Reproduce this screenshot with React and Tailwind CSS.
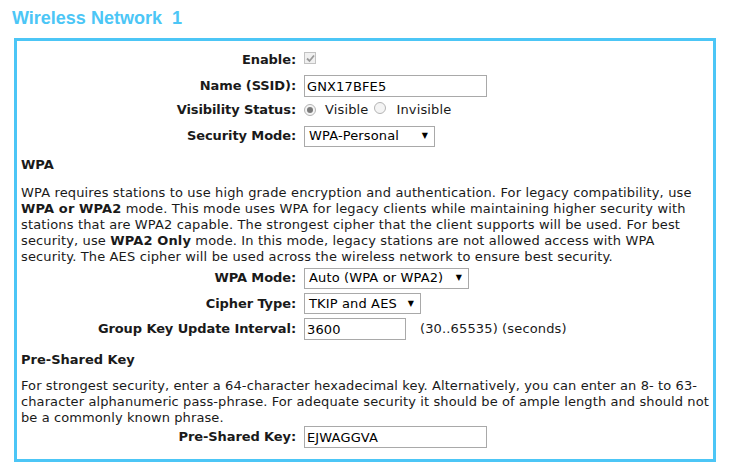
import React from 'react';

const Label = ({ children }) => (
  <div className="w-[283px] shrink-0 text-right font-bold pr-[8px] tracking-[-0.1px]">{children}</div>
);

const Row = ({ label, h, children }) => (
  <div className={`flex items-center ${h}`}>
    <Label>{label}</Label>
    <div className="flex items-center tracking-[0.14px]">{children}</div>
  </div>
);

const TextBox = ({ value, w }) => (
  <input
    readOnly
    value={value}
    className={`${w} h-[22px] border border-[#a9a9a9] px-[2px] text-[13px] text-black outline-none font-['DejaVu_Sans',sans-serif]`}
  />
);

const Select = ({ value, w }) => (
  <div className={`${w} h-[21px] border border-[#a9a9a9] bg-white flex items-center justify-between pl-[4px] pr-[6px]`}>
    <span className="text-black">{value}</span>
    <span className="text-[8px] text-black">▼</span>
  </div>
);

const Radio = ({ checked }) => (
  <span className="inline-flex w-[12px] h-[12px] rounded-full border border-[#b4b4b4] bg-[#f4f4f4] items-center justify-center">
    {checked && <span className="w-[6px] h-[6px] rounded-full bg-[#7a7a7a]" />}
  </span>
);

export default function App() {
  return (
    <div className="w-[729px] h-[471px] bg-white font-['DejaVu_Sans',sans-serif] text-[13px] text-[#1a1a1a] leading-[16px]">
      <h1 className="pl-[12px] pt-[8px] h-[38px] font-['Liberation_Sans',Arial,sans-serif] font-bold text-[18px] leading-[20px] text-[#4cc6f6]">
        Wireless Network&nbsp;&nbsp;1
      </h1>
      <div className="ml-[14px] w-[702px] h-[424px] border-[3px] border-[#4cc6f6] pl-[4px]">
        <div className="pt-[6px]">
          <Row label="Enable:" h="h-[26px]">
            <span className="w-[12px] h-[12px] border border-[#c2c2c2] bg-[#f0f0f0] flex items-center justify-center -mt-[4px]">
              <svg width="9" height="9" viewBox="0 0 9 9">
                <path d="M1 4.5 L3.5 7 L8 1.5" stroke="#9a9a9a" strokeWidth="1.8" fill="none" />
              </svg>
            </span>
          </Row>
          <Row label="Name (SSID):" h="h-[26px]">
            <TextBox value="GNX17BFE5" w="w-[183px]" />
          </Row>
          <Row label="Visibility Status:" h="h-[21px]">
            <span className="flex items-center">
              <Radio checked />
              <span className="ml-[9px]">Visible</span>
              <span className="ml-[6px]"><Radio /></span>
              <span className="ml-[10px]">Invisible</span>
            </span>
          </Row>
          <Row label="Security Mode:" h="h-[32px]">
            <Select value="WPA-Personal" w="w-[131px]" />
          </Row>
        </div>

        <h2 className="font-bold text-[13px] leading-[18px] mt-[4px]">WPA</h2>
        <p className="mt-[11px] whitespace-nowrap tracking-[0.14px]">
          WPA requires stations to use high grade encryption and authentication. For legacy compatibility, use<br />
          <b>WPA or WPA2</b> mode. This mode uses WPA for legacy clients while maintaining higher security with<br />
          stations that are WPA2 capable. The strongest cipher that the client supports will be used. For best<br />
          security, use <b>WPA2 Only</b> mode. In this mode, legacy stations are not allowed access with WPA<br />
          security. The AES cipher will be used across the wireless network to ensure best security.
        </p>

        <div className="mt-0">
          <Row label="WPA Mode:" h="h-[26px]">
            <Select value="Auto (WPA or WPA2)" w="w-[165px]" />
          </Row>
          <Row label="Cipher Type:" h="h-[25px]">
            <Select value="TKIP and AES" w="w-[117px]" />
          </Row>
          <Row label="Group Key Update Interval:" h="h-[26px]">
            <TextBox value="3600" w="w-[102px]" />
            <span className="ml-[14px]">(30..65535) (seconds)</span>
          </Row>
        </div>

        <h2 className="font-bold text-[13px] leading-[18px] mt-[9px]">Pre-Shared Key</h2>
        <p className="mt-[9px] whitespace-nowrap tracking-[0.1px]">
          For strongest security, enter a 64-character hexadecimal key. Alternatively, you can enter an 8- to 63-<br />
          character alphanumeric pass-phrase. For adequate security it should be of ample length and should not<br />
          be a commonly known phrase.
        </p>
        <div className="mt-0">
          <Row label="Pre-Shared Key:" h="h-[22px]">
            <TextBox value="EJWAGGVA" w="w-[183px]" />
          </Row>
        </div>
      </div>
    </div>
  );
}
